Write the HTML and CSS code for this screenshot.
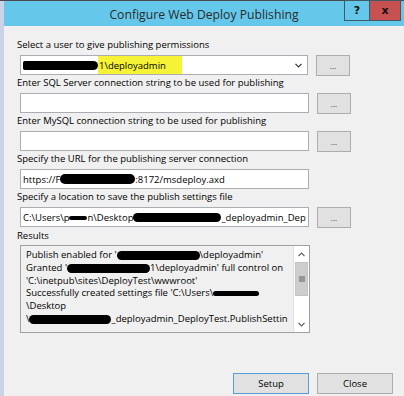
FILE: index.html
```html
<!DOCTYPE html>
<html>
<head>
<meta charset="utf-8">
<link rel="stylesheet" href="styles.css">
</head>
<body>
<div class="window">
  <div class="frame-left"></div>
  <div class="main">
    <div class="titlebar">
      <div class="title">Configure Web Deploy Publishing</div>
      <div class="caption-btns">
        <div class="cap help">?</div>
        <div class="cap close">x</div>
      </div>
    </div>
    <div class="content">
      <div class="field">
        <div class="label">Select a user to give publishing permissions</div>
        <div class="row">
          <div class="box combo">
            <span class="blob blob-user"></span><span class="hl">1\deployadmin</span>
            <svg class="chev" width="7" height="5" viewBox="0 0 7 5"><path d="M0.5 0.8 L3.5 3.8 L6.5 0.8" fill="none" stroke="#333" stroke-width="1.2"/></svg>
          </div>
          <div class="btn dots">...</div>
        </div>
      </div>
      <div class="field">
        <div class="label">Enter SQL Server connection string to be used for publishing</div>
        <div class="row">
          <div class="box"></div>
          <div class="btn dots">...</div>
        </div>
      </div>
      <div class="field">
        <div class="label">Enter MySQL connection string to be used for publishing</div>
        <div class="row">
          <div class="box"></div>
          <div class="btn dots">...</div>
        </div>
      </div>
      <div class="field">
        <div class="label">Specify the URL for the publishing server connection</div>
        <div class="row">
          <div class="box">https://F<span class="blob blob-url"></span>:8172/msdeploy.axd</div>
        </div>
      </div>
      <div class="field">
        <div class="label">Specify a location to save the publish settings file</div>
        <div class="row">
          <div class="box">C:\Users\p<span class="blob blob-thin"></span>n\Desktop<span class="blob blob-path"></span>_deployadmin_Dep</div>
          <div class="btn dots">...</div>
        </div>
      </div>
      <div class="label results-label">Results</div>
      <div class="results">
        <div class="results-text">
          <div class="line">Publish enabled for '<span class="blob blob-r1"></span>\deployadmin'</div>
          <div class="line">Granted '<span class="blob blob-r2"></span>1\deployadmin' full control on</div>
          <div class="line">'C:\inetpub\sites\DeployTest\wwwroot'</div>
          <div class="line">Successfully created settings file 'C:\Users\<span class="blob blob-r4"></span></div>
          <div class="line">\Desktop</div>
          <div class="line">\<span class="blob blob-r6"></span>_deployadmin_DeployTest.PublishSettin</div>
        </div>
        <div class="scrollbar">
          <div class="sb-arrow">
            <svg width="7" height="5" viewBox="0 0 7 5"><path d="M0.5 4 L3.5 1 L6.5 4" fill="none" stroke="#606060" stroke-width="1.1"/></svg>
          </div>
          <div class="sb-thumb">
            <svg width="6" height="6" viewBox="0 0 6 6"><path d="M0 1H6M0 3H6M0 5H6" stroke="#606060" stroke-width="1"/></svg>
          </div>
          <div class="sb-track"></div>
          <div class="sb-arrow">
            <svg width="7" height="5" viewBox="0 0 7 5"><path d="M0.5 1 L3.5 4 L6.5 1" fill="none" stroke="#606060" stroke-width="1.1"/></svg>
          </div>
        </div>
      </div>
      <div class="actions">
        <div class="btn action default">Setup</div>
        <div class="btn action">Close</div>
      </div>
    </div>
  </div>
</div>
</body>
</html>
```

FILE: styles.css
```css
* { box-sizing: border-box; }
html, body {
  margin: 0;
  padding: 0;
  width: 404px;
  height: 396px;
  overflow: hidden;
  background: #f0f0f0;
}
body {
  font-family: "Open Sans", "Noto Sans", sans-serif;
  font-size: 9.5px;
  color: #000;
}
.window {
  display: flex;
  width: 404px;
  height: 396px;
  border-top: 1px solid #4a4a4a;
}
.frame-left {
  width: 4px;
  flex: none;
  background: #cbd4e6;
}
.main {
  flex: 1;
  display: flex;
  flex-direction: column;
  background: #f0f0f0;
}
.titlebar {
  position: relative;
  height: 25px;
  flex: none;
  background: #65c8ea;
  display: flex;
  align-items: center;
  justify-content: center;
}
.title {
  font-size: 12.2px;
  color: #2b2b2b;
  padding-top: 1px;
}
.caption-btns {
  position: absolute;
  right: 3px;
  top: -1px;
  display: flex;
}
.cap {
  height: 21px;
  border: 1px solid #3d5964;
  display: flex;
  align-items: center;
  justify-content: center;
  font-family: "DejaVu Sans", sans-serif;
  font-weight: bold;
  color: #111;
}
.help {
  width: 25px;
  background: #65c8ea;
  font-size: 11px;
  border-right: none;
}
.close {
  width: 32px;
  background: #c75050;
  font-size: 11px;
}
.content {
  padding: 12px 0 0 0;
  display: flex;
  flex-direction: column;
}
.field {
  margin-bottom: 1px;
}
.label {
  height: 14px;
  line-height: 14px;
  padding-left: 13px;
  margin-bottom: 3px;
  white-space: nowrap;
}
.row {
  display: flex;
  align-items: center;
  padding-left: 16px;
  gap: 8px;
  height: 20px;
}
.box {
  width: 289px;
  height: 20px;
  background: #fff;
  border: 1px solid #abadb3;
  display: flex;
  align-items: center;
  padding-left: 2px;
  white-space: nowrap;
  overflow: hidden;
  position: relative;
}
.combo {
  width: 288px;
}
.chev {
  position: absolute;
  right: 5px;
  top: 7px;
}
.hl {
  background: #f6f337;
  height: 18px;
  display: flex;
  align-items: center;
  padding-left: 1px;
  padding-right: 16px;
}
.blob {
  display: inline-block;
  background: #000;
  border-radius: 5px;
  height: 9px;
  flex: none;
}
.blob-user { width: 75px; border-radius: 2px 5px 5px 2px; }
.blob-url { width: 75px; height: 10px; }
.blob-thin { width: 18px; height: 4px; margin-top: 2px; }
.blob-path { width: 88px; height: 9px; }
.blob-r1 { width: 83px; }
.blob-r2 { width: 83px; }
.blob-r4 { width: 46px; height: 5px; }
.blob-r6 { width: 82px; }
.btn {
  background: #e1e1e1;
  border: 1px solid #adadad;
  display: flex;
  align-items: center;
  justify-content: center;
}
.dots {
  width: 34px;
  height: 21px;
  font-size: 8px;
  color: #333;
}
.results-label {
  margin-top: 1px;
  margin-bottom: 2px;
}
.results {
  margin-left: 16px;
  width: 290px;
  height: 88px;
  border: 1px solid #a0a0a0;
  background: #f0f0f0;
  display: flex;
}
.results-text {
  flex: 1;
  overflow: hidden;
  padding: 3px 0 0 5px;
}
.line {
  height: 12.8px;
  line-height: 12.8px;
  white-space: nowrap;
  display: flex;
  align-items: center;
}
.scrollbar {
  width: 16px;
  flex: none;
  display: flex;
  flex-direction: column;
  background: #fff;
  border-left: 1px solid #e0e0e0;
}
.sb-arrow {
  height: 16px;
  display: flex;
  align-items: center;
  justify-content: center;
  background: #fff;
}
.sb-thumb {
  height: 34px;
  background: #cdcdcd;
  border: 1px solid #c2c2c2;
  margin: 0 1px;
  display: flex;
  align-items: center;
  justify-content: center;
}
.sb-track {
  flex: 1;
}
.actions {
  margin-top: 40px;
  display: flex;
  gap: 8px;
  padding-left: 229px;
}
.action {
  width: 76px;
  height: 21px;
  font-size: 9.5px;
}
.default {
  border-color: #5b9bd5;
}
```
